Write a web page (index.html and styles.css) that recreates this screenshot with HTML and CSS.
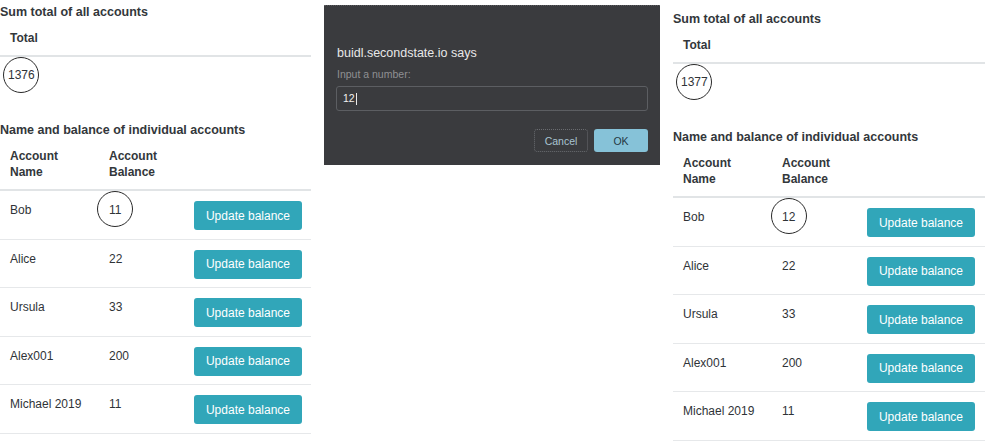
FILE: index.html
```html
<!DOCTYPE html>
<html>
<head>
<meta charset="utf-8">
<link rel="stylesheet" href="styles.css">
</head>
<body>
<div class="page">
  <section class="panel">
    <h2 class="title">Sum total of all accounts</h2>
    <table class="tbl total-tbl">
      <thead><tr><th>Total</th></tr></thead>
      <tbody><tr><td><span class="circled">1376</span></td></tr></tbody>
    </table>
    <h2 class="title second">Name and balance of individual accounts</h2>
    <table class="tbl acc-tbl">
      <thead><tr><th class="c-name">Account<br>Name</th><th class="c-bal">Account<br>Balance</th><th></th></tr></thead>
      <tbody>
        <tr><td>Bob</td><td><span class="circled">11</span></td><td class="c-btn"><button class="btn">Update balance</button></td></tr>
        <tr><td>Alice</td><td>22</td><td class="c-btn"><button class="btn">Update balance</button></td></tr>
        <tr><td>Ursula</td><td>33</td><td class="c-btn"><button class="btn">Update balance</button></td></tr>
        <tr><td>Alex001</td><td>200</td><td class="c-btn"><button class="btn">Update balance</button></td></tr>
        <tr><td>Michael 2019</td><td>11</td><td class="c-btn"><button class="btn">Update balance</button></td></tr>
      </tbody>
    </table>
  </section>

  <div class="dialog">
    <div class="d-title">buidl.secondstate.io says</div>
    <div class="d-label">Input a number:</div>
    <div class="d-input">12<span class="caret"></span></div>
    <div class="d-actions">
      <button class="d-btn cancel">Cancel</button>
      <button class="d-btn ok">OK</button>
    </div>
  </div>

  <section class="panel right">
    <h2 class="title">Sum total of all accounts</h2>
    <table class="tbl total-tbl">
      <thead><tr><th>Total</th></tr></thead>
      <tbody><tr><td><span class="circled">1377</span></td></tr></tbody>
    </table>
    <h2 class="title second">Name and balance of individual accounts</h2>
    <table class="tbl acc-tbl">
      <thead><tr><th class="c-name">Account<br>Name</th><th class="c-bal">Account<br>Balance</th><th></th></tr></thead>
      <tbody>
        <tr><td>Bob</td><td><span class="circled">12</span></td><td class="c-btn"><button class="btn">Update balance</button></td></tr>
        <tr><td>Alice</td><td>22</td><td class="c-btn"><button class="btn">Update balance</button></td></tr>
        <tr><td>Ursula</td><td>33</td><td class="c-btn"><button class="btn">Update balance</button></td></tr>
        <tr><td>Alex001</td><td>200</td><td class="c-btn"><button class="btn">Update balance</button></td></tr>
        <tr><td>Michael 2019</td><td>11</td><td class="c-btn"><button class="btn">Update balance</button></td></tr>
      </tbody>
    </table>
  </section>
</div>
</body>
</html>
```

FILE: styles.css
```css
* { box-sizing: border-box; }
html, body { margin: 0; padding: 0; background: #fff; }
body {
  font-family: "Liberation Sans", Arial, sans-serif;
  color: #2f3337;
  font-size: 12px;
  width: 1000px;
  height: 441px;
  overflow: hidden;
}
.page {
  display: flex;
  align-items: flex-start;
  gap: 13px;
}
.panel {
  width: 311px;
  flex: none;
  padding-top: 3px;
}
.panel.right {
  width: 312px;
  margin-top: 7px;
}
.title {
  margin: 0;
  font-size: 12.5px;
  line-height: 18px;
  font-weight: bold;
  color: #33373b;
}
.title.second {
  margin-top: 27px;
}
.tbl {
  width: 100%;
  border-collapse: collapse;
}
.tbl th {
  text-align: left;
  font-weight: bold;
  font-size: 12px;
  color: #33373b;
  vertical-align: bottom;
  border-bottom: 2px solid #e1e4e6;
}
.total-tbl th {
  padding: 8px 10px 8px;
  line-height: 18px;
}
.total-tbl td {
  padding: 9px 8px 10px;
  line-height: 18px;
}
.acc-tbl th {
  padding: 9px 10px 9px;
  line-height: 16px;
}
.acc-tbl td {
  padding: 10px 10px 8.5px;
  line-height: 18px;
  vertical-align: top;
  border-bottom: 1px solid #e6e8ea;
}
.acc-tbl .c-name { width: 99px; }
.acc-tbl .c-bal { width: 85px; }
.acc-tbl td.c-btn { padding-right: 9px; }
.btn {
  display: block;
  width: 108px;
  height: 29px;
  margin: 0;
  padding: 0;
  border: none;
  border-radius: 3px;
  background: #31a6b9;
  color: #fff;
  font-family: "Liberation Sans", Arial, sans-serif;
  font-size: 12px;
}
.circled {
  position: relative;
  display: inline-block;
}
.circled::after {
  content: "";
  position: absolute;
  left: 50%;
  top: 50%;
  width: 34px;
  height: 34px;
  transform: translate(-50%, -50%);
  border: 1px solid #2a2a2a;
  border-radius: 50%;
}
.acc-tbl .circled::after { margin-top: -1px; }

.dialog {
  flex: none;
  width: 336px;
  height: 160px;
  margin-top: 5px;
  background: #3a3b3e;
  border-top: 1px dotted #5a5b5e;
  padding: 38px 12px 0 13px;
}
.d-title {
  color: #e8e8e8;
  font-size: 12.5px;
  line-height: 18px;
}
.d-label {
  margin-top: 5px;
  color: #8f9093;
  font-size: 10.5px;
  line-height: 14px;
}
.d-input {
  margin-top: 5px;
  margin-left: -1px;
  height: 25px;
  border: 1px solid #5c5e62;
  border-radius: 3px;
  color: #f0f0f0;
  font-size: 10.5px;
  line-height: 23px;
  padding-left: 6px;
  display: flex;
  align-items: center;
}
.caret {
  display: inline-block;
  width: 1px;
  height: 12px;
  margin-left: 1px;
  background: #eaeaea;
}
.d-actions {
  display: flex;
  justify-content: flex-end;
  gap: 6px;
  margin-top: 18px;
}
.d-btn {
  width: 54px;
  height: 23px;
  margin: 0;
  padding: 0;
  border-radius: 3px;
  font-family: "Liberation Sans", Arial, sans-serif;
  font-size: 10.5px;
}
.d-btn.cancel {
  background: transparent;
  border: 1px dotted #6a6c70;
  color: #a9c4d2;
}
.d-btn.ok {
  background: #86c2d8;
  border: none;
  color: #253742;
}
```
